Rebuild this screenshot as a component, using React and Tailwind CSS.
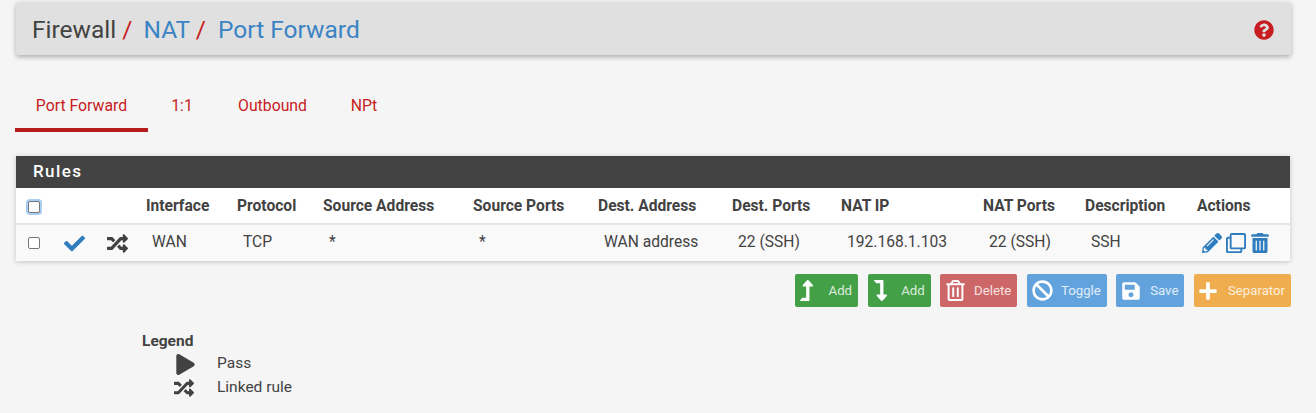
import { FaLevelUpAlt, FaLevelDownAlt, FaRandom, FaCheck, FaPencilAlt, FaRegClone, FaTrashAlt, FaRegTrashAlt, FaSave, FaBan, FaPlus, FaPlay, FaQuestionCircle } from 'react-icons/fa'

const tabs = [
  { label: 'Port Forward', width: 'w-[133px]', active: true },
  { label: '1:1', width: 'w-[68px]' },
  { label: 'Outbound', width: 'w-[113px]' },
  { label: 'NPt', width: 'w-[70px]' }
]

const columns = [
  { label: '', width: 'w-[44px]' },
  { label: '', width: 'w-[40px]' },
  { label: '', width: 'w-[46px]' },
  { label: 'Interface', width: 'w-[91px]' },
  { label: 'Protocol', width: 'w-[86px]' },
  { label: 'Source Address', width: 'w-[150px]' },
  { label: 'Source Ports', width: 'w-[125px]' },
  { label: 'Dest. Address', width: 'w-[134px]' },
  { label: 'Dest. Ports', width: 'w-[109px]' },
  { label: 'NAT IP', width: 'w-[142px]' },
  { label: 'NAT Ports', width: 'w-[102px]' },
  { label: 'Description', width: 'w-[112px]' },
  { label: 'Actions', width: 'w-[93px]' }
]

const cells = ['WAN', 'TCP', '*', '*', 'WAN address', '22 (SSH)', '192.168.1.103', '22 (SSH)', 'SSH']

const buttons = [
  { icon: FaLevelUpAlt, label: 'Add', width: 'w-[63px]', color: 'bg-[#43a047]', size: 21, pad: 'pl-[1px]' },
  { icon: FaLevelDownAlt, label: 'Add', width: 'w-[63px]', color: 'bg-[#43a047]', size: 21, pad: 'pl-[2px]' },
  { icon: FaRegTrashAlt, label: 'Delete', width: 'w-[77px]', color: 'bg-[#cd6767]', size: 21, pad: 'pl-[5px]' },
  { icon: FaBan, label: 'Toggle', width: 'w-[80px]', color: 'bg-[#63a3dd]', size: 21, pad: 'pl-[5px]' },
  { icon: FaSave, label: 'Save', width: 'w-[68px]', color: 'bg-[#63a3dd]', size: 20, pad: 'pl-[5px]' },
  { icon: FaPlus, label: 'Separator', width: 'w-[97px]', color: 'bg-[#f0ad4e]', size: 20, pad: 'pl-[4px]' }
]

export default function App() {
  return (
    <div className="h-[413px] overflow-hidden bg-[#f5f5f5] px-4 pt-[2px] font-['Roboto',sans-serif] text-[#424242]">
      {/* Breadcrumb */}
      <div className="flex h-[53px] w-[1275px] items-center justify-between rounded-[3px] bg-[#e0e0e0] pl-4 pr-[17px] pt-[2px] shadow-[0_2px_5px_rgba(0,0,0,0.3)]">
        <h1 className="pt-[2px] text-[24.5px] leading-none text-[#424242]">
          Firewall<span className="text-[#c71c22]"> / </span>
          <span className="ml-[5px] text-[#3b84c4]">NAT</span>
          <span className="text-[#c71c22]"> / </span>
          <span className="ml-[6px] text-[#3b84c4]">Port Forward</span>
        </h1>
        <FaQuestionCircle size={20} className="text-[#c71c22]" />
      </div>

      {/* Tabs */}
      <nav className="-ml-[1px] mt-[25px] flex h-[52px]">
        {tabs.map(tab => (
          <div
            key={tab.label}
            className={`${tab.width} flex items-center justify-center border-b-4 pt-[4px] text-[15.8px] text-[#c71c22] ${tab.active ? 'border-[#b71c1c]' : 'border-transparent'}`}
          >
            {tab.label}
          </div>
        ))}
      </nav>

      {/* Rules panel */}
      <div className="mt-[24px] w-[1274px] bg-white shadow-[0_1px_5px_rgba(0,0,0,0.2)]">
        <div className="flex h-[32px] items-center bg-[#424242] pl-[17px] text-[17px] font-medium tracking-[1.4px] text-white">Rules</div>
        <table className="w-full table-fixed border-collapse text-left text-[15.6px]">
          <thead>
            <tr className="h-[36px] border-b-2 border-[#e5e5e5] bg-white">
              {columns.map((col, i) => (
                <th key={i} className={`${col.width} p-0 pt-[2px] font-bold text-[#424242]`}>
                  {i === 0 ? (
                    <span className="ml-[12px] block h-[12px] w-[12px] rounded-[2px] border border-[#767676] bg-white shadow-[0_0_0_2px_#a9cdf0]" />
                  ) : col.label}
                </th>
              ))}
            </tr>
          </thead>
          <tbody>
            <tr className="h-[37px] bg-[#f9f9f9]">
              <td className="p-0">
                <span className="ml-[12px] block h-[12px] w-[12px] rounded-[2px] border border-[#767676] bg-white" />
              </td>
              <td className="p-0"><FaCheck size={21} className="ml-[4px] text-[#2f7dbf]" /></td>
              <td className="p-0"><FaRandom size={21} className="ml-[7px] text-[#424242]" /></td>
              {cells.map((cell, i) => (
                <td key={i} className="p-0 pl-[6px] text-[#424242]">{cell}</td>
              ))}
              <td className="p-0">
                <div className="flex items-center gap-[4px] pl-[5px] text-[#2f7dbf]">
                  <FaPencilAlt size={20} />
                  <FaRegClone size={20} />
                  <FaTrashAlt size={20} />
                </div>
              </td>
            </tr>
          </tbody>
        </table>
      </div>

      {/* Action buttons */}
      <div className="mt-[13px] flex w-[1275px] justify-end gap-[9.6px]">
        {buttons.map((btn, i) => {
          const Icon = btn.icon
          return (
            <button
              key={i}
              className={`${btn.width} ${btn.color} ${btn.pad} flex h-[33px] items-center justify-between rounded-[2px] pr-[6px] text-[13.2px] text-white/80`}
            >
              <Icon size={btn.size} className="text-white" />
              <span>{btn.label}</span>
            </button>
          )
        })}
      </div>

      {/* Legend */}
      <div className="mt-[23px] pl-[126px] text-[15.5px]">
        <div className="font-bold leading-[22px]">Legend</div>
        <div className="flex h-[24px] items-center">
          <FaPlay size={21} className="ml-[33px] mr-[21px] text-[#424242]" />
          <span>Pass</span>
        </div>
        <div className="flex h-[24px] items-center">
          <FaRandom size={20} className="ml-[32px] mr-[23px] text-[#424242]" />
          <span>Linked rule</span>
        </div>
      </div>
    </div>
  )
}
